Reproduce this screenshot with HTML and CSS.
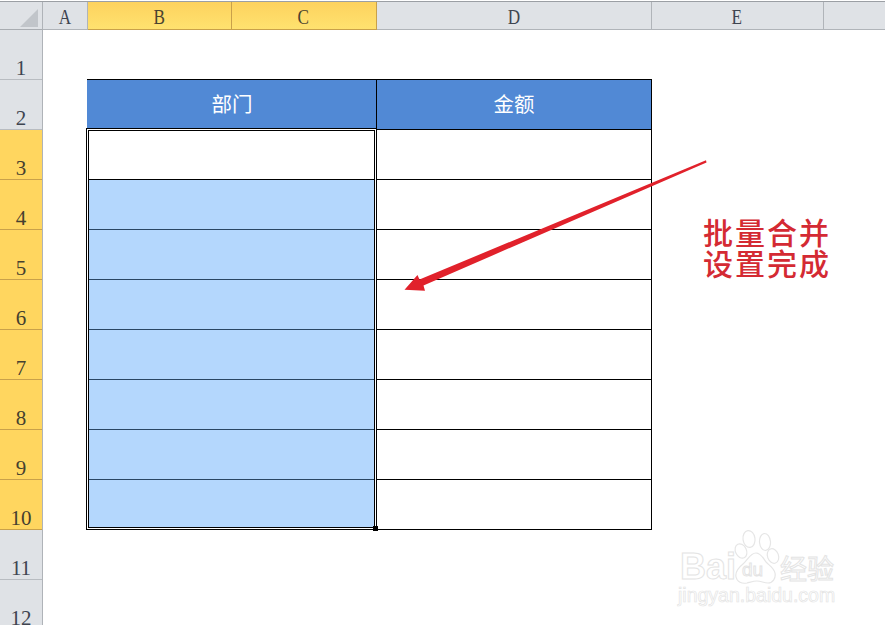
FILE: index.html
```html
<!DOCTYPE html>
<html lang="zh">
<head>
<meta charset="utf-8">
<title>批量合并设置完成</title>
<link rel="stylesheet" href="styles.css">
</head>
<body>
<div class="app">
  <div class="col-bar">
    <div class="corner"><svg width="18" height="18" viewBox="0 0 18 18"><path d="M18 0V18H0Z" fill="#c1c5ca"/></svg></div>
    <div class="ch ch-a"><span class="glyph">A</span></div>
    <div class="ch ch-b sel"><span class="glyph">B</span></div>
    <div class="ch ch-c sel"><span class="glyph">C</span></div>
    <div class="ch ch-d"><span class="glyph">D</span></div>
    <div class="ch ch-e"><span class="glyph">E</span></div>
    <div class="ch ch-f"></div>
  </div>
  <div class="main">
    <div class="row-bar">
      <div class="rh">1</div><div class="rh">2</div>
      <div class="rh sel">3</div><div class="rh sel">4</div><div class="rh sel">5</div><div class="rh sel">6</div>
      <div class="rh sel">7</div><div class="rh sel">8</div><div class="rh sel">9</div><div class="rh sel">10</div>
      <div class="rh">11</div><div class="rh">12</div>
    </div>
    <div class="sheet">
      <div class="table">
        <div class="cell head">部门</div><div class="cell head">金额</div>
        <div class="cell"></div><div class="cell"></div>
        <div class="cell fill"></div><div class="cell"></div>
        <div class="cell fill"></div><div class="cell"></div>
        <div class="cell fill"></div><div class="cell"></div>
        <div class="cell fill"></div><div class="cell"></div>
        <div class="cell fill"></div><div class="cell"></div>
        <div class="cell fill"></div><div class="cell"></div>
        <div class="cell fill"></div><div class="cell"></div>
        <div class="selection"><span class="handle"></span></div>
      </div>
    </div>
  </div>
  <svg class="arrow" width="885" height="625" viewBox="0 0 885 625"><path d="M706 160.2L419.5 279.5L417.5 275L404.5 289.7L425 290.7L423.5 285.5L706.5 162.4Z" fill="#e1212b"/></svg>
  <div class="note">批量合并<br>设置完成</div>
  <div class="mark">
    <svg class="paw" width="60" height="62" viewBox="0 0 60 62" fill="#fff" stroke="#e6e6e6" stroke-width="1.2">
      <ellipse cx="11" cy="22" rx="5.5" ry="7.5" transform="rotate(-25 11 22)"/>
      <ellipse cx="19" cy="10" rx="6" ry="8.5" transform="rotate(-8 19 10)"/>
      <ellipse cx="35" cy="13" rx="5.5" ry="8.5" transform="rotate(-5 35 13)"/>
      <ellipse cx="43" cy="27" rx="5.5" ry="7.5" transform="rotate(-20 43 27)"/>
      <path d="M26 24C20 24 18 31 13 35C8 39 5 43 6 48C7 53 12 55 17 54C21 53 24 52 27 52C31 52 34 54 38 54C43 54 46 49 45 44C44 39 40 37 36 33C33 29 31 24 26 24Z"/>
    </svg>
    <span class="mark-bai">Bai</span>
    <span class="mark-du">du</span>
    <span class="mark-cn">经验</span>
    <span class="mark-url">jingyan.baidu.com</span>
  </div>
</div>
</body>
</html>
```
FILE: styles.css
```css
* { box-sizing: border-box; }
html, body { margin: 0; height: 100%; }
body { background: #fff; overflow: hidden; font-family: "Liberation Serif", serif; }
.app { position: relative; width: 885px; height: 625px; overflow: hidden; padding-top: 1px; }

.col-bar { display: flex; height: 29px; border-top: 1px solid #9b9fa4; background: #dfe2e6; }
.corner { width: 43px; flex: none; display: flex; align-items: flex-end; justify-content: flex-end; padding: 0 4px 2px 0; border-right: 1px solid #afb3b8; border-bottom: 1px solid #a8acb1; }
.ch { flex: none; display: flex; align-items: center; justify-content: center; padding: 2px 1px 0 0; color: #3e4450; border-right: 1px solid #b0b4b9; border-bottom: 1px solid #b0b4b9; }
.glyph { display: inline-block; font-size: 22px; line-height: 24px; transform: scaleX(.78); }
.ch-a { width: 45px; }
.ch-b { width: 144px; }
.ch-c { width: 145px; }
.ch-d { width: 275px; }
.ch-e { width: 172px; }
.ch-f { flex: 1; border-right: 0; }
.ch.sel { background: linear-gradient(#fdd25e, #ffe26f); border-color: #c9a14a; color: #4a4330; }

.main { display: flex; height: 595px; }
.row-bar { width: 43px; flex: none; border-right: 1px solid #afb3b8; background: #dfe2e6; }
.rh { height: 50px; display: flex; align-items: flex-end; justify-content: center; padding-bottom: 1px; font-size: 21px; line-height: 20px; color: #3e4450; border-bottom: 1px solid #b8bcc1; }
.rh.sel { background: #ffd65f; border-bottom-color: #c9a14a; color: #45402f; }

.sheet { flex: 1; padding: 49px 0 0 44px; }
.table { position: relative; display: grid; grid-template-columns: 290px 275px; grid-auto-rows: 50px; width: 565px; border-top: 1px solid #000; }
.cell { border-right: 1px solid #000; border-bottom: 1px solid #000; background: #fff; }
.cell:nth-child(odd) { border-left: 1px solid #000; }
.cell.fill { background: #b4d7fd; border-bottom-color: #2a4663; }
.cell.head { background: #5189d5; border-left-color: #5189d5; color: #fff; display: flex; align-items: center; justify-content: center; font-family: "Noto Sans CJK SC", sans-serif; font-size: 20.5px; font-weight: 400; padding-bottom: 4px; }

.selection { position: absolute; left: 0; top: 49px; width: 289px; height: 400px; border: 1px solid #fff; box-shadow: 0 0 0 1px #000, inset 0 0 0 1px #000; pointer-events: none; }
.handle { position: absolute; right: -3px; bottom: -3px; width: 5px; height: 5px; background: #000; }

.arrow { position: absolute; left: 0; top: 0; pointer-events: none; }
.note { position: absolute; left: 703px; top: 216px; font-family: "Noto Sans CJK SC", sans-serif; font-size: 30px; font-weight: 500; line-height: 31px; letter-spacing: 2px; color: #d42a33; white-space: nowrap; }

.mark { position: absolute; left: 678px; top: 530px; width: 160px; height: 78px; }
.mark span { position: absolute; color: #fff; -webkit-text-stroke: 1px #e4e4e4; font-family: "Liberation Sans", sans-serif; white-space: nowrap; }
.paw { position: absolute; left: 52px; top: -1px; }
.mark-bai { left: 2px; top: 17px; font-size: 36px; line-height: 40px; font-weight: 700; }
.mark-du { left: 64px; top: 29px; font-size: 19px; line-height: 22px; }
.mark span.mark-cn { left: 102px; top: 22px; font-size: 27px; line-height: 32px; font-family: "Noto Sans CJK SC", sans-serif; }
.mark span.mark-url { left: 0; top: 53px; font-size: 19.5px; line-height: 24px; -webkit-text-stroke-width: .7px; }
```
